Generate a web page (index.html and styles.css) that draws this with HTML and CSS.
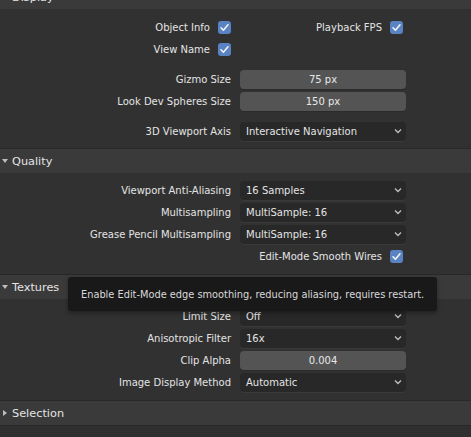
FILE: index.html
```html
<!DOCTYPE html>
<html>
<head>
<meta charset="utf-8">
<link rel="stylesheet" href="styles.css">
</head>
<body>
<div class="prefs">
  <div class="panel">
    <div class="header header-cut"><span class="htitle">Display</span></div>
    <div class="body body-display">
      <div class="row">
        <div class="lcell"><span>Object Info</span><span class="check"><svg viewBox="0 0 13 13"><path d="M3 6.8 L5.4 9.2 L10 3.8" /></svg></span></div>
        <div class="rcell"><span>Playback FPS</span><span class="check"><svg viewBox="0 0 13 13"><path d="M3 6.8 L5.4 9.2 L10 3.8" /></svg></span></div>
      </div>
      <div class="row">
        <div class="lcell"><span>View Name</span><span class="check"><svg viewBox="0 0 13 13"><path d="M3 6.8 L5.4 9.2 L10 3.8" /></svg></span></div>
      </div>
      <div class="row gap-top">
        <div class="lcell lab">Gizmo Size</div>
        <div class="num">75 px</div>
      </div>
      <div class="row">
        <div class="lcell lab">Look Dev Spheres Size</div>
        <div class="num">150 px</div>
      </div>
      <div class="row gap-top">
        <div class="lcell lab">3D Viewport Axis</div>
        <div class="drop"><span>Interactive Navigation</span><svg class="chev" viewBox="0 0 8 6"><path d="M1 1.5 L4 4.5 L7 1.5"/></svg></div>
      </div>
    </div>
  </div>
  <div class="panel">
    <div class="header"><svg class="tri" viewBox="0 0 8 8"><path d="M1 2 L7 2 L4 6 Z"/></svg><span class="htitle">Quality</span></div>
    <div class="body body-quality">
      <div class="row">
        <div class="lcell lab">Viewport Anti-Aliasing</div>
        <div class="drop"><span>16 Samples</span><svg class="chev" viewBox="0 0 8 6"><path d="M1 1.5 L4 4.5 L7 1.5"/></svg></div>
      </div>
      <div class="row">
        <div class="lcell lab">Multisampling</div>
        <div class="drop"><span>MultiSample: 16</span><svg class="chev" viewBox="0 0 8 6"><path d="M1 1.5 L4 4.5 L7 1.5"/></svg></div>
      </div>
      <div class="row">
        <div class="lcell lab">Grease Pencil Multisampling</div>
        <div class="drop"><span>MultiSample: 16</span><svg class="chev" viewBox="0 0 8 6"><path d="M1 1.5 L4 4.5 L7 1.5"/></svg></div>
      </div>
      <div class="row">
        <div class="lcell"></div>
        <div class="rcell wide"><span>Edit-Mode Smooth Wires</span><span class="check"><svg viewBox="0 0 13 13"><path d="M3 6.8 L5.4 9.2 L10 3.8" /></svg></span></div>
      </div>
    </div>
  </div>
  <div class="panel">
    <div class="header"><svg class="tri" viewBox="0 0 8 8"><path d="M1 2 L7 2 L4 6 Z"/></svg><span class="htitle">Textures</span></div>
    <div class="body body-textures">
      <div class="row">
        <div class="lcell lab">Limit Size</div>
        <div class="drop"><span>Off</span><svg class="chev" viewBox="0 0 8 6"><path d="M1 1.5 L4 4.5 L7 1.5"/></svg></div>
      </div>
      <div class="row">
        <div class="lcell lab">Anisotropic Filter</div>
        <div class="drop"><span>16x</span><svg class="chev" viewBox="0 0 8 6"><path d="M1 1.5 L4 4.5 L7 1.5"/></svg></div>
      </div>
      <div class="row">
        <div class="lcell lab">Clip Alpha</div>
        <div class="num">0.004</div>
      </div>
      <div class="row">
        <div class="lcell lab">Image Display Method</div>
        <div class="drop"><span>Automatic</span><svg class="chev" viewBox="0 0 8 6"><path d="M1 1.5 L4 4.5 L7 1.5"/></svg></div>
      </div>
    </div>
    <div class="tooltip">Enable Edit-Mode edge smoothing, reducing aliasing, requires restart.</div>
  </div>
  <div class="panel">
    <div class="header"><svg class="tri" viewBox="0 0 8 8"><path d="M2 1 L6 4 L2 7 Z"/></svg><span class="htitle">Selection</span></div>
  </div>
</div>
</body>
</html>
```
FILE: styles.css
```css
html, body {
  margin: 0;
  padding: 0;
  background: #2f2f2f;
}
body {
  width: 471px;
  height: 437px;
  overflow: hidden;
  font-family: "DejaVu Sans", sans-serif;
  font-size: 10px;
  color: #e4e4e4;
}
.prefs {
  display: flex;
  flex-direction: column;
}
.panel {
  position: relative;
  border-bottom: 1px solid #282828;
}
.header {
  height: 24px;
  background: #3a3a3a;
  display: flex;
  align-items: center;
  font-size: 11.3px;
}
.header-cut {
  height: 24px;
  margin-top: -15px;
  padding-left: 12px;
}
.tri {
  width: 8px;
  height: 8px;
  margin-left: 1px;
  margin-right: 3px;
  fill: #bdbdbd;
}
.body {
  background: #313131;
  display: flex;
  flex-direction: column;
}
.body-display { padding: 7px 0 6px; }
.body-quality { padding: 6px 0 7px; }
.body-textures { padding: 6px 0 7px; }
.row {
  height: 22px;
  display: grid;
  grid-template-columns: 240px 166px;
  align-items: center;
}
.gap-top { margin-top: 8px; }
.lcell {
  display: flex;
  justify-content: flex-end;
  align-items: center;
  padding-right: 9px;
  white-space: nowrap;
}
.rcell {
  display: flex;
  justify-content: flex-end;
  align-items: center;
  padding-right: 3px;
  white-space: nowrap;
}
.check {
  width: 13px;
  height: 13px;
  border-radius: 3px;
  background: #5a83c4;
  margin-left: 8px;
  display: flex;
}
.check svg {
  width: 13px;
  height: 13px;
  fill: none;
  stroke: #f2f2f2;
  stroke-width: 1.6;
  stroke-linecap: round;
  stroke-linejoin: round;
}
.num {
  height: 19px;
  background: #545454;
  border-radius: 4px;
  display: flex;
  align-items: center;
  justify-content: center;
  color: #e8e8e8;
  box-shadow: 0 1px 0 #2a2a2a;
}
.drop {
  height: 19px;
  background: #282828;
  border-radius: 4px;
  display: flex;
  align-items: center;
  justify-content: space-between;
  padding: 0 4px 0 6px;
  color: #e4e4e4;
  box-shadow: 0 1px 0 #3a3a3a;
}
.chev {
  width: 8px;
  height: 6px;
  fill: none;
  stroke: #bcbcbc;
  stroke-width: 1.4;
}
.tooltip {
  position: absolute;
  left: 68px;
  top: 2px;
  width: 369px;
  height: 34px;
  box-sizing: border-box;
  padding-left: 13px;
  display: flex;
  align-items: center;
  background: #191919;
  border-radius: 3px;
  box-shadow: 0 2px 4px rgba(0,0,0,0.35);
  color: #dadada;
  font-size: 9.8px;
  white-space: nowrap;
}
```
